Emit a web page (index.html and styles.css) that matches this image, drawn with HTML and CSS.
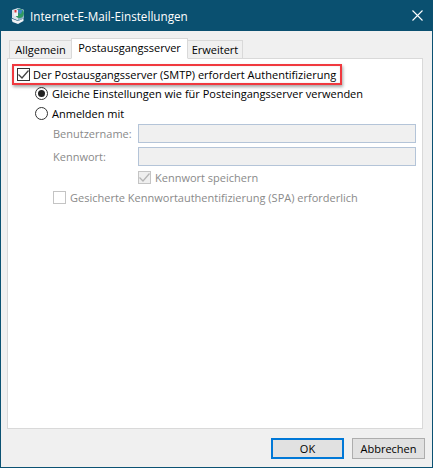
FILE: index.html
```html
<!DOCTYPE html>
<html lang="de">
<head>
<meta charset="utf-8">
<title>Internet-E-Mail-Einstellungen</title>
<link rel="stylesheet" href="styles.css">
</head>
<body>
<div class="window">
  <header class="titlebar">
    <svg class="app-icon" width="18" height="18" viewBox="0 0 18 18">
      <path d="M3 3 L9 1 L15 3 L15 11 L9 13.5 L3 11 Z" fill="#dbe2ea"/>
      <path d="M9 1 L15 3 L15 11 L9 13.5 Z" fill="#8fb3c8"/>
      <circle cx="10.5" cy="6.5" r="4.5" fill="#2f9a63"/>
      <path d="M8 2.5 L13.5 3 L12 7 L9.5 6 Z" fill="#3f86c9"/>
      <rect x="5" y="3" width="4" height="6" fill="#f1f1f5"/>
      <rect x="5.5" y="3" width="2" height="2.5" fill="#d8393f"/>
      <path d="M2.5 11.5 L9 14 L14.5 11.5 L14.5 14 L9 17 L3.5 15 Z" fill="#eef1f5"/>
    </svg>
    <span class="title">Internet-E-Mail-Einstellungen</span>
    <svg class="close" width="11" height="11" viewBox="0 0 11 11"><path d="M.5 .5 L10.5 10.5 M10.5 .5 L.5 10.5" stroke="#fff" stroke-width="1.1" fill="none"/></svg>
  </header>
  <main class="body">
    <nav class="tabs">
      <div class="tab tab-first">Allgemein</div>
      <div class="tab tab-active">Postausgangsserver</div>
      <div class="tab tab-last">Erweitert</div>
    </nav>
    <section class="panel">
      <div class="row row-auth">
        <span class="check"><svg width="13" height="13" viewBox="0 0 13 13"><path d="M1.5 6.5 L5 10 L11.5 2.5" stroke="#444" stroke-width="1.3" fill="none"/></svg></span>
        <label>Der Postausgangsserver (SMTP) erfordert Authentifizierung</label>
        <span class="highlight"></span>
      </div>
      <div class="row row-radio">
        <span class="radio radio-on"></span>
        <label>Gleiche Einstellungen wie für Posteingangsserver verwenden</label>
      </div>
      <div class="row row-radio row-radio2">
        <span class="radio"></span>
        <label>Anmelden mit</label>
      </div>
      <div class="field">
        <label class="muted field-label">Benutzername:</label>
        <span class="input"></span>
      </div>
      <div class="field field2">
        <label class="muted field-label">Kennwort:</label>
        <span class="input"></span>
      </div>
      <div class="row row-save">
        <span class="check check-muted check-filled"><svg width="13" height="13" viewBox="0 0 13 13"><path d="M1.5 6.5 L5 10 L11.5 2.5" stroke="#b5b5b5" stroke-width="1.3" fill="none"/></svg></span>
        <label class="muted">Kennwort speichern</label>
      </div>
      <div class="row row-spa">
        <span class="check check-muted"></span>
        <label class="muted">Gesicherte Kennwortauthentifizierung (SPA) erforderlich</label>
      </div>
    </section>
    <footer class="buttons">
      <button class="btn btn-default">OK</button>
      <button class="btn">Abbrechen</button>
    </footer>
  </main>
</div>
</body>
</html>
```
FILE: styles.css
```css
* { box-sizing: border-box; }
html, body { margin: 0; padding: 0; }
body {
  width: 433px;
  height: 468px;
  overflow: hidden;
  font-family: "Open Sans", "Noto Sans", sans-serif;
  font-size: 11px;
  color: #000;
}
.window {
  width: 433px;
  height: 468px;
  display: flex;
  flex-direction: column;
  border: 1px solid #0b5273;
  border-top: 0;
  background: #f0f0f0;
}
.titlebar {
  height: 31px;
  flex: none;
  margin: 0 -1px;
  padding: 0 10px 0 9px;
  display: flex;
  align-items: center;
  background: #0a5070;
  color: #fff;
}
.app-icon { flex: none; margin-right: 3px; }
.title { flex: 1; font-size: 11.7px; }
.close { flex: none; }
.body {
  flex: 1;
  display: flex;
  flex-direction: column;
  padding: 7px 9px 8px 6px;
}
.tabs {
  display: flex;
  align-items: flex-end;
  height: 21px;
  padding-left: 2px;
  position: relative;
  z-index: 1;
  margin-bottom: -1px;
}
.tab {
  height: 19px;
  line-height: 18px;
  text-align: center;
  background: #f0f0f0;
  border: 1px solid #d9d9d9;
  border-right: 0;
}
.tab-first { width: 62px; }
.tab-last { width: 55px; border-left: 0; border-right: 1px solid #d9d9d9; }
.tab-active {
  width: 117px;
  height: 21px;
  line-height: 18px;
  background: #fff;
  border-right: 1px solid #d9d9d9;
  border-bottom-color: #fff;
}
.panel {
  flex: 1;
  background: #fff;
  border: 1px solid #d9d9d9;
  padding: 5px 0 0 0;
}
.row { display: flex; align-items: center; height: 20px; }
.row label { white-space: nowrap; margin-left: 3px; }
.row-auth { position: relative; padding-left: 9px; }
.highlight {
  position: absolute;
  left: 4px;
  top: 0;
  width: 330px;
  height: 21px;
  border: 2px solid #f0393f;
  box-shadow: 1px 2px 3px rgba(0,0,0,.35), inset 0 0 2px rgba(0,0,0,.12);
  pointer-events: none;
}
.check {
  width: 13px;
  height: 13px;
  flex: none;
  border: 1px solid #333;
  background: #fff;
  display: flex;
  align-items: center;
  justify-content: center;
}
.check svg { flex: none; }
.check-muted { border-color: #c4c4c4; }
.check-filled { background: #efefef; }
.muted { color: #8a8a8a; }
.row-radio { padding-left: 27px; margin-top: -1px; }
.row-radio2 { margin-top: 0; }
.row-radio label { margin-left: 4px; }
.radio {
  width: 13px;
  height: 13px;
  flex: none;
  border: 1px solid #333;
  border-radius: 50%;
  background: #fff;
  display: flex;
  align-items: center;
  justify-content: center;
}
.radio-on::after {
  content: "";
  width: 7px;
  height: 7px;
  border-radius: 50%;
  background: #222;
}
.field {
  display: flex;
  align-items: center;
  padding-left: 45px;
  margin-top: 1px;
}
.field2 { margin-top: 4px; }
.field-label { width: 85px; flex: none; }
.input {
  width: 278px;
  height: 19px;
  flex: none;
  background: #f0f0f0;
  border: 1px solid #b4c4d8;
}
.row-save { padding-left: 130px; margin-top: 1px; }
.row-save label { margin-left: 4px; }
.row-spa { padding-left: 45px; }
.row-spa label { margin-left: 4px; }
.buttons {
  flex: none;
  display: flex;
  justify-content: flex-end;
  gap: 8px;
  padding-top: 9px;
  margin-right: -2px;
}
.btn {
  height: 21px;
  width: 73px;
  padding: 0;
  font: inherit;
  color: #000;
  background: #e1e1e1;
  border: 1px solid #adadad;
}
.btn-default { border: 2px solid #0078d7; }
```
